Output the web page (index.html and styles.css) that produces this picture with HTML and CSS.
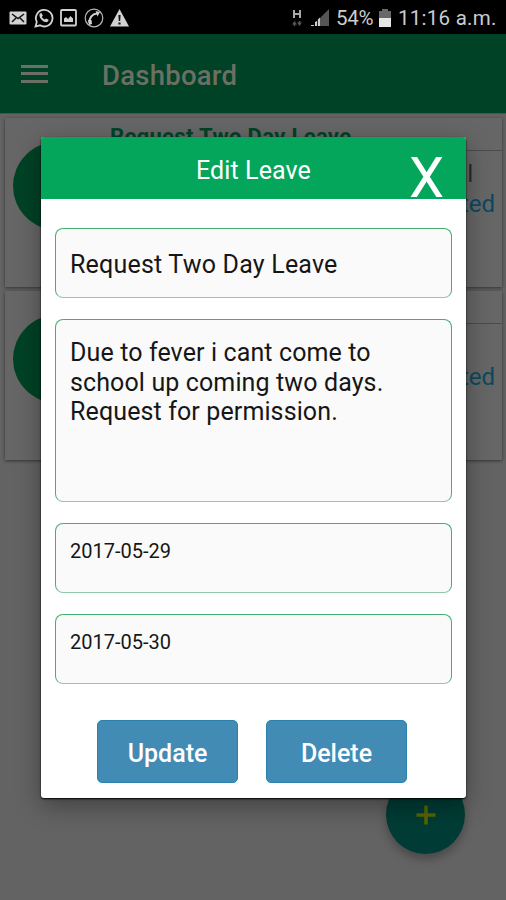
FILE: index.html
```html
<!DOCTYPE html>
<html lang="en">
<head>
<meta charset="utf-8">
<title>Dashboard</title>
<link rel="stylesheet" href="styles.css">
</head>
<body>
<div class="screen">
  <header class="status">
    <div class="notes">
      <svg width="18" height="14" viewBox="0 0 18 14"><rect x=".5" y=".5" width="17" height="13" rx="1" fill="#d2d2d2"/><path d="M3 3l6 4.500L15 3M3 11l4-4M15 11l-4-4" fill="none" stroke="#111" stroke-width="1.500"/></svg>
      <svg width="20" height="20" viewBox="0 0 20 20"><path d="M1.500 18.500l1.300-4.600A8.300 8.300 0 1 1 6 17.300z" fill="none" stroke="#d2d2d2" stroke-width="1.800"/><path d="M5.500 6l1.800-1.200 1.500 2.700-1 1.400c.7 1.200 1.700 2.100 2.900 2.700l1.300-1.200 2.600 1.400c-.2 2-1.600 2.700-3.200 2.300C8.200 13.300 4.900 9.500 5.500 6z" fill="#d2d2d2"/></svg>
      <svg width="17" height="18" viewBox="0 0 17 18"><rect x="1" y="1" width="15" height="15.500" rx="1" fill="none" stroke="#d2d2d2" stroke-width="1.800"/><path d="M4 13V9.500l2-1.500 2 2 2.500-3L13 9.500V13z" fill="#d2d2d2"/></svg>
      <svg width="20" height="20" viewBox="0 0 20 20"><circle cx="10" cy="10" r="8.800" fill="none" stroke="#b8b8b8" stroke-width="1.200"/><path d="M5.500 15C5 10 8 6 13 5.500" fill="none" stroke="#d2d2d2" stroke-width="2"/><path d="M11.500 3l4.500 1-2.500 4.500zM4 12l3.500 0 .5 4-3 1z" fill="#d2d2d2"/></svg>
      <svg width="19" height="18" viewBox="0 0 19 18"><path d="M9.500 0L19 17.500H0z" fill="#d2d2d2"/><path d="M8.400 6h2.200l-.4 6H8.800zM8.400 13.500h2.200v2H8.400z" fill="#111"/></svg>
    </div>
    <div class="signals">
      <svg class="net" width="10" height="18" viewBox="0 0 10 18"><path d="M2 1v8M8 1v8M2 5h6" fill="none" stroke="#aaa" stroke-width="2"/><path d="M2.500 12L5 15.500H3.300V17H1.700v-1.500H0zM7.500 17L5 13.500h1.700V12h1.600v1.500H10z" fill="#555"/></svg>
      <svg class="bars" width="18" height="18" viewBox="0 0 18 18"><path d="M9 9L18 0v17H9z" fill="#555"/><path d="M0 16h3v1H0zM4 13l2-1v5H4zM6.800 10.500L9 8.500V17H6.800z" fill="#ccc"/></svg>
      <span class="pct">54%</span>
      <svg class="battery" width="12" height="18" viewBox="0 0 12 18"><path d="M3 0h6v2h3v7H0V2h3z" fill="#686868"/><path d="M0 9h12v9H0z" fill="#e6e6e6"/></svg>
      <span class="clock">11:16 a.m.</span>
    </div>
  </header>
  <nav class="appbar">
    <div class="burger"><i></i><i></i><i></i></div>
    <h1>Dashboard</h1>
  </nav>
  <main class="list">
    <article class="card">
      <div class="avatar"></div>
      <div class="info"><h2>Request Two Day Leave</h2><p class="kind">l</p><p class="state">ted</p></div>
    </article>
    <article class="card">
      <div class="avatar"></div>
      <div class="info"><h2></h2><p class="kind"></p><p class="state">ted</p></div>
    </article>
  </main>
  <div class="fab"><svg width="20" height="20" viewBox="0 0 20 20"><path d="M10 .5v19M.5 10h19" stroke="#596500" stroke-width="3.500"/></svg></div>
  <section class="modal">
    <div class="modal-head"><h3>Edit Leave</h3><span class="close">X</span></div>
    <div class="form">
      <div class="field title">Request Two Day Leave</div>
      <div class="field reason">Due to fever i cant come to<br>school up coming two days.<br>Request for permission.</div>
      <div class="field date">2017-05-29</div>
      <div class="field date">2017-05-30</div>
      <div class="actions"><div class="btn">Update</div><div class="btn">Delete</div></div>
    </div>
  </section>
</div>
</body>
</html>
```
FILE: styles.css
```css
* { box-sizing: border-box; }
body { margin: 0; font-family: Roboto, "Liberation Sans", sans-serif; }
h1, h2, h3, p { margin: 0; font-weight: 400; }
svg { display: block; flex: none; }
.screen { position: relative; width: 506px; height: 900px; overflow: hidden; background: #636363; }

.status { height: 34px; background: #000; color: #ccc; display: flex; justify-content: space-between; padding: 0 10px 0 9px; }
.notes { display: flex; align-items: center; gap: 6.500px; padding-top: 1px; }
.signals { display: flex; align-items: center; font-size: 20.500px; white-space: nowrap; padding-top: 2px; }
.bars { margin: 0 7px 0 9px; }
.pct { width: 38px; letter-spacing: -.3px; }
.battery { margin: 0 7px 0 5px; }
.clock { width: 98px; letter-spacing: .25px; }

.appbar { height: 79px; background: #004225; display: flex; align-items: center; padding-left: 21px; gap: 54px; }
.burger { width: 27px; display: flex; flex-direction: column; gap: 4.500px; }
.burger i { height: 3px; background: #6c6f64; }
.appbar h1 { font-size: 27.500px; font-weight: 500; letter-spacing: .25px; color: #6c6f64; padding-top: 3px; }

.list { padding: 4px 4px 0 5px; border-top: 1px solid #505050; display: flex; flex-direction: column; gap: 4px; }
.card { height: 169px; background: #666; display: flex; padding-left: 8px; box-shadow: 0 1px 3px #333; }
.avatar { width: 88px; height: 88px; border-radius: 50%; background: #004225; margin-top: 24px; }
.info { flex: 1; text-align: right; padding-left: 9px; }
.info h2 { height: 33px; border-bottom: 1px solid #4b4b4b; font-size: 22px; letter-spacing: .35px; line-height: 37px; font-weight: 700; color: #004225; text-align: left; white-space: nowrap; }
.kind { height: 36px; padding-right: 29px; font-size: 23px; line-height: 47px; color: #292929; }
.state { padding-right: 7px; font-size: 24px; line-height: 35px; color: #0b4960; }

.fab { position: absolute; left: 386px; top: 775px; width: 79px; height: 79px; border-radius: 50%; background: #003c35; display: flex; align-items: center; justify-content: center; box-shadow: 0 5px 10px rgba(0,0,0,.28); }

.modal { position: absolute; left: 41px; top: 137px; width: 425px; height: 661px; background: #fff; border-radius: 3px; box-shadow: 0 1px 2px #000, 0 8px 24px rgba(0,0,0,.35); }
.modal-head { position: relative; height: 62px; background: #03a65a; border-radius: 3px 3px 0 0; color: #fff; }
.modal-head h3 { font-size: 25px; line-height: 67px; letter-spacing: .1px; text-align: center; }
.close { position: absolute; right: 22px; top: 9px; font-size: 56px; line-height: 64px; }
.form { padding: 29px 14px 0; display: flex; flex-direction: column; gap: 21px; }
.field { height: 70px; border: 1px solid #45af72; border-bottom-color: #8fc9a5; border-radius: 8px; background: #fafafa; color: #161616; padding: 0 14px; }
.title { font-size: 25px; line-height: 72px; letter-spacing: .2px; }
.reason { height: 183px; font-size: 25px; line-height: 29.500px; letter-spacing: .12px; padding-top: 18px; }
.date { font-size: 20px; line-height: 24px; padding-top: 15px; }
.actions { display: flex; justify-content: center; gap: 28px; padding: 15px 3px 0 0; }
.btn { width: 141px; height: 63px; border-radius: 5px; background: #428bb5; border: 1px solid #2d82ad; color: #fff; font-size: 25px; font-weight: 500; line-height: 65px; text-align: center; }
```
